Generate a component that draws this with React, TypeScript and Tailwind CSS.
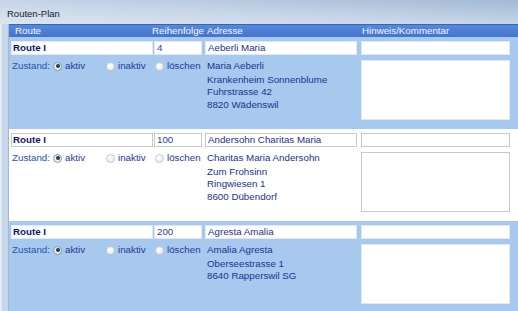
import type { ReactNode } from "react";

type RouteRow = {
  order: string;
  name: string;
  address: string[];
  tinted: boolean;
};

const rows: RouteRow[] = [
  {
    order: "4",
    name: "Aeberli Maria",
    address: ["Maria Aeberli", "Krankenheim Sonnenblume", "Fuhrstrasse 42", "8820 Wädenswil"],
    tinted: true,
  },
  {
    order: "100",
    name: "Andersohn Charitas Maria",
    address: ["Charitas Maria Andersohn", "Zum Frohsinn", "Ringwiesen 1", "8600 Dübendorf"],
    tinted: false,
  },
  {
    order: "200",
    name: "Agresta Amalia",
    address: ["Amalia Agresta", "Oberseestrasse 1", "8640 Rapperswil SG"],
    tinted: true,
  },
];

function Field({ width, tinted, className, children }: { width: string; tinted: boolean; className?: string; children?: ReactNode }) {
  return (
    <div
      className={`${width} flex h-[14px] items-center border bg-white leading-none ${
        tinted ? "border-[#dfe8f4]" : "border-[#c9c9c9]"
      } ${className ?? ""}`}
    >
      {children}
    </div>
  );
}

function Radio({ checked, label, width }: { checked?: boolean; label: string; width: string }) {
  return (
    <span className={`${width} flex items-center`}>
      {checked ? (
        <span className="flex h-[9px] w-[9px] items-center justify-center rounded-full border border-[#8e9cab] bg-[radial-gradient(circle,#ffffff_0%,#d5dce3_100%)]">
          <span className="h-[4px] w-[4px] rounded-full bg-[#263c4c]" />
        </span>
      ) : (
        <span className="h-[9px] w-[9px] rounded-full border border-[#c2cad2] bg-[radial-gradient(circle_at_35%_35%,#ffffff_0%,#dfe4ea_100%)]" />
      )}
      <span className="ml-[3px] text-[#23389c]">{label}</span>
    </span>
  );
}

function RouteEntry({ row }: { row: RouteRow }) {
  return (
    <div className={`h-[92px] pl-[2px] pt-[4px] ${row.tinted ? "bg-[#a8c9ee]" : "bg-white"}`}>
      <div className="flex">
        <Field width="w-[142px]" tinted={row.tinted} className="pl-[1px] font-bold text-[#12126e]">
          Route I
        </Field>
        <Field width="w-[48px]" tinted={row.tinted} className="ml-[1px] pl-[2px] text-[#2e40a4]">
          {row.order}
        </Field>
        <Field width="w-[152px]" tinted={row.tinted} className="ml-[3px] pl-[2px] text-[#24318c]">
          {row.name}
        </Field>
        <Field width="w-[149px]" tinted={row.tinted} className="ml-[4px]" />
      </div>
      <div className="mt-[5px] flex">
        <div className="flex h-[12.5px] w-[194px] items-center">
          <span className="ml-[1px] w-[41px] text-[#2752b0]">Zustand:</span>
          <Radio checked label="aktiv" width="w-[53px]" />
          <Radio label="inaktiv" width="w-[49px]" />
          <Radio label="löschen" width="w-[50px]" />
        </div>
        <div className="w-[152px] pl-[2px] leading-[12.5px] text-[#213190]">
          {row.address.map((line, i) => (
            <div key={line} className={i === 0 ? "mb-[1px]" : ""}>
              {line}
            </div>
          ))}
        </div>
        <div
          className={`ml-[4px] h-[60px] w-[149px] border bg-white ${
            row.tinted ? "border-[#dfe8f4]" : "border-[#c9c9c9]"
          }`}
        />
      </div>
    </div>
  );
}

export default function App() {
  return (
    <div className="h-[311px] w-[518px] overflow-hidden bg-[#c9d8ea] font-['Liberation_Sans',Arial,sans-serif] text-[9.75px]">
      <div className="h-[24px] bg-[linear-gradient(to_bottom_left,#a3b9d4_0%,#c2d2e6_45%,#dde6f0_100%)] pl-[7px] pt-[7px] text-[9.5px] text-[#141c2c]">
        Routen-Plan
      </div>
      <div className="flex">
        <div className="w-[9px] self-stretch border-l-[2px] border-r border-l-[#e3ebf4] border-r-[#a3b8d0] bg-[#c7d6e9]" />
        <div className="flex-1">
          <div className="flex h-[13px] items-center border-t border-[#3a64b4] bg-[linear-gradient(180deg,#5689dc_0%,#4474cc_100%)] text-[#f2f6ff]">
            <span className="w-[143px] pl-[6px]">Route</span>
            <span className="w-[55px]">Reihenfolge</span>
            <span className="w-[155px]">Adresse</span>
            <span>Hinweis/Kommentar</span>
          </div>
          {rows.map((row) => (
            <RouteEntry key={row.order} row={row} />
          ))}
        </div>
      </div>
    </div>
  );
}
